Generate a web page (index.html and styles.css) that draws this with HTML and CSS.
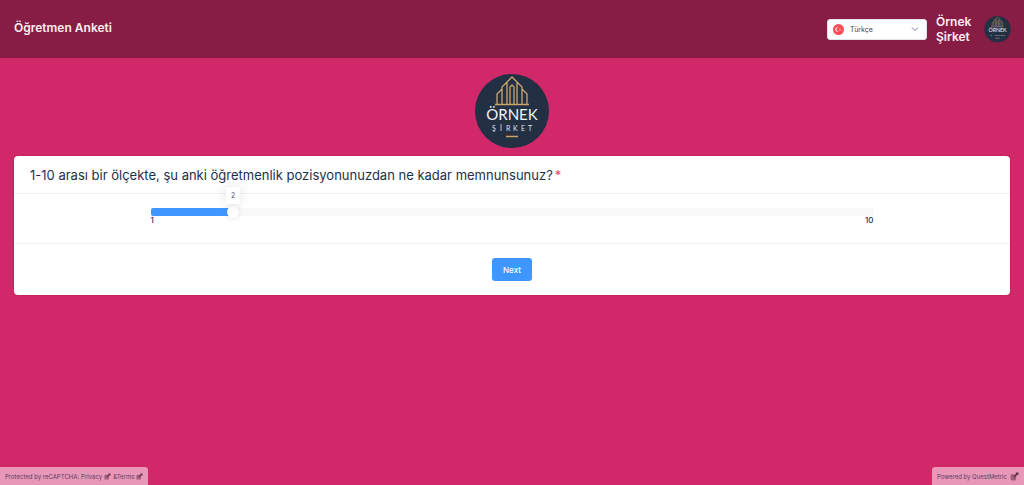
FILE: index.html
```html
<!DOCTYPE html>
<html lang="tr">
<head>
  <meta charset="UTF-8">
  <meta name="viewport" content="width=device-width, initial-scale=1.0">
  <title>Öğretmen Anketi</title>
  <link rel="stylesheet" href="styles.css">
</head>
<body>
  <svg class="sprite" aria-hidden="true">
    <symbol id="external" viewBox="0 0 16 16">
      <path d="M1 6q0-2 2-2h8v9q0 2-2 2H3q-2 0-2-2z" fill="currentColor" opacity=".55"/>
      <path d="M10 1h5v5l-2-1-5 5-2-2 5-5z" fill="currentColor"/>
    </symbol>
  </svg>

  <header class="header">
    <h1 class="survey-title">Öğretmen Anketi</h1>
    <div class="header-right">
      <div class="language">
        <svg class="flag" viewBox="0 0 12 12" aria-hidden="true">
          <circle cx="6" cy="6" r="6" fill="#ff4b55"/>
          <path d="M6.200 4.200a2.300 2.300 0 1 0 0 3.600a1.900 1.900 0 1 1 0-3.600z" fill="#fff"/>
          <path d="M7.500 5l.3.7.8.1-.6.500.2.800-.7-.4-.7.4.2-.8-.6-.5.800-.1z" fill="#fff"/>
        </svg>
        <select class="language-select" aria-label="Dil">
          <option>Türkçe</option>
          <option>English</option>
        </select>
        <svg class="chevron" viewBox="0 0 8 8" aria-hidden="true">
          <path d="M1 2.500l3 3 3-3" fill="none" stroke="#7083a0" stroke-width="1"/>
        </svg>
      </div>
      <div class="company">Örnek Şirket</div>
      <svg class="avatar" viewBox="0 0 76 76">
        <circle cx="38" cy="37" r="37" fill="#232f42"/>
        <path d="M21 30.500h34M23 30V20l5-5M28 30V13L38 3l10 10v17M48 15l5 5v10M33 30V8M36 30V13l2-2 2 2v17M43 30V8" fill="none" stroke="#c9a56c" stroke-width="1.300"/>
        <text x="38" y="46" text-anchor="middle" font-size="15" fill="#f2f3f5">ÖRNEK</text>
        <text x="18 28 33 41 48 54" y="57" font-size="7" fill="#e4e6ea">ŞİRKET</text>
        <path d="M32 62.500h12" stroke="#c9a56c" stroke-width="1.500"/>
      </svg>
    </div>
  </header>

  <main class="content">
    <svg class="logo" viewBox="0 0 76 76">
      <circle cx="38" cy="37" r="37" fill="#232f42"/>
      <path d="M21 30.500h34M23 30V20l5-5M28 30V13L38 3l10 10v17M48 15l5 5v10M33 30V8M36 30V13l2-2 2 2v17M43 30V8" fill="none" stroke="#c9a56c" stroke-width="1.300"/>
      <text x="38" y="46" text-anchor="middle" font-size="15" fill="#f2f3f5">ÖRNEK</text>
      <text x="18 26 32 39 47 54" y="57" font-size="7" fill="#e4e6ea">ŞİRKET</text>
      <path d="M32 62.500h12" stroke="#c9a56c" stroke-width="1.500"/>
    </svg>

    <form class="card">
      <div class="card-header">
        <label class="question" for="satisfaction">1-10 arası bir ölçekte, şu anki öğretmenlik pozisyonunuzdan ne kadar memnunsunuz?<span class="required">*</span></label>
      </div>
      <div class="card-body">
        <div class="slider">
          <div class="track">
            <input class="range" type="range" id="satisfaction" min="1" max="10" value="2">
            <output class="tooltip" for="satisfaction">2</output>
          </div>
          <div class="limits">
            <span>1</span>
            <span>10</span>
          </div>
        </div>
      </div>
      <div class="card-footer">
        <button class="btn" type="button">Next</button>
      </div>
    </form>
  </main>

  <footer class="footer">
    <div class="note note-left">
      <span>Protected by reCAPTCHA:</span>
      <a href="#">Privacy <svg class="icon"><use href="#external"/></svg></a>
      <a href="#">&amp;Terms <svg class="icon"><use href="#external"/></svg></a>
    </div>
    <div class="note note-right">
      <a href="#">Powered by QuestMetric <svg class="icon icon-lg"><use href="#external"/></svg></a>
    </div>
  </footer>

  <script>
    const range = document.getElementById('satisfaction');

    // keep the fill and the tooltip on the current value
    range.addEventListener('input', () => {
      const ratio = (range.value - range.min) / (range.max - range.min);
      range.parentElement.style.setProperty('--ratio', ratio);
      document.querySelector('.tooltip').textContent = range.value;
    });
  </script>
</body>
</html>
```

FILE: styles.css
```css
* {
  box-sizing: border-box;
}
body {
  display: flex;
  flex-direction: column;
  min-height: 100vh;
  margin: 0;
  background-color: #d1286a;
  color: #1e2f4b;
  font-family: Inter, sans-serif;
  font-size: 8px;
}
.sprite {
  position: absolute;
  width: 0;
  height: 0;
}
.header {
  display: flex;
  align-items: center;
  justify-content: space-between;
  min-height: 58px;
  padding: 0 13px 0 14px;
  background-color: #871c45;
  color: #f9eef3;
}
.survey-title {
  margin: 0;
  padding-bottom: 2px;
  font-size: 12px;
  font-weight: 600;
  line-height: 16px;
}
.header-right {
  display: flex;
  align-items: center;
}
.language {
  display: grid;
  grid-template-columns: 100px;
  align-items: center;
}
.language > * {
  grid-area: 1 / 1;
}
.language-select {
  appearance: none;
  width: 100%;
  height: 21px;
  padding: 0 22px;
  border: 1px solid #e1e3ea;
  border-radius: 3px;
  background-color: #fff;
  color: #3f4254;
  font-family: inherit;
  font-size: 7px;
}
.flag {
  z-index: 1;
  width: 11px;
  height: 11px;
  margin-left: 6px;
  pointer-events: none;
}
.chevron {
  z-index: 1;
  justify-self: end;
  width: 8px;
  height: 8px;
  margin-right: 8px;
  pointer-events: none;
}
.company {
  width: 40px;
  margin: 0 8px 0 9px;
  font-size: 12px;
  font-weight: 600;
  line-height: 15px;
}
.avatar {
  width: 27px;
  height: 27px;
}
.content {
  flex: 1;
  padding: 16px 14px;
}
.logo {
  display: block;
  width: 76px;
  height: 76px;
  margin: 0 auto 6px;
}
.logo,
.avatar {
  font-family: Lato, sans-serif;
}
.card {
  border-radius: 4px;
  background-color: #fff;
  box-shadow: 0 0 2px rgba(0, 0, 0, 0.2);
}
.card-header {
  padding: 10px 16px 9px;
  border-bottom: 1px solid #f1f1f4;
}
.question {
  display: block;
  font-size: 13px;
  line-height: 18px;
}
.required {
  margin-left: 2px;
  color: #f1416c;
}
.card-body {
  padding: 14px 16px 18px;
  border-bottom: 1px solid #f1f1f4;
}
.slider {
  width: 75%;
  margin: 0 auto;
}
.track {
  --ratio: 0.1111;
  position: relative;
  display: flex;
  align-items: center;
  height: 8px;
  border-radius: 2px;
  background: linear-gradient(#3e97ff, #3e97ff) no-repeat #f9f9f9;
  background-size: calc(3px + (100% - 6px) * var(--ratio)) 100%;
}
.range {
  appearance: none;
  flex: 1;
  height: 12px;
  margin: 0 -3px;
  background: transparent;
}
.range::-webkit-slider-thumb {
  appearance: none;
  width: 12px;
  height: 12px;
  border-radius: 50%;
  background-color: #fff;
  box-shadow: 0 0 6px rgba(0, 0, 0, 0.12);
}
.tooltip {
  position: absolute;
  bottom: 12px;
  left: calc(3px + (100% - 6px) * var(--ratio));
  padding: 3px 5px;
  border-radius: 2px;
  background-color: #fff;
  box-shadow: 0 0 12px rgba(0, 0, 0, 0.12);
  color: #4b5675;
  font-size: 7px;
  line-height: 11px;
  transform: translateX(-50%);
}
.limits {
  display: flex;
  justify-content: space-between;
  font-weight: 500;
  line-height: 9px;
}
.card-footer {
  padding: 14px 16px;
  text-align: center;
}
.btn {
  height: 23px;
  padding: 0 11px;
  border: none;
  border-radius: 3px;
  background-color: #3e97ff;
  color: #fff;
  font-family: inherit;
  font-size: 8px;
  font-weight: 500;
  cursor: pointer;
  vertical-align: top;
}
.btn:hover {
  background-color: #2884ef;
}
.footer {
  display: flex;
  justify-content: space-between;
}
.note {
  display: flex;
  align-items: center;
  gap: 2px;
  height: 18px;
  padding: 0 5px;
  background-color: #e997b8;
  color: #5e3c62;
  font-size: 6px;
}
.note-left {
  border-top-right-radius: 3px;
}
.note-right {
  border-top-left-radius: 3px;
}
.note a {
  display: flex;
  align-items: center;
  gap: 2px;
  color: inherit;
  text-decoration: none;
}
.icon {
  width: 7px;
  height: 7px;
  color: #65304d;
}
.icon-lg {
  width: 9px;
  height: 9px;
  margin-left: 1px;
}
```
